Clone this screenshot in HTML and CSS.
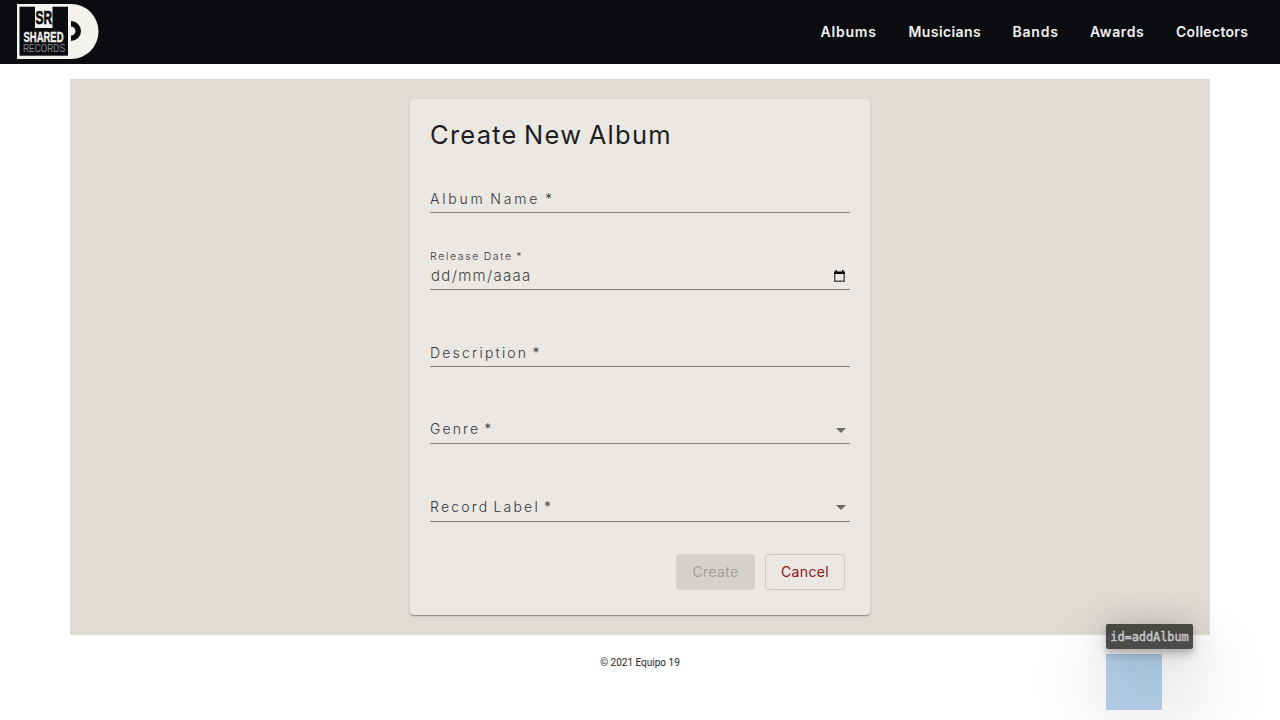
FILE: index.html
```html
<!DOCTYPE html>
<html lang="en">
<head>
<meta charset="utf-8">
<title>Shared Records</title>
<link rel="stylesheet" href="styles.css">
</head>
<body>
<header class="navbar">
  <svg class="logo" width="84" height="58" viewBox="0 0 84 58" aria-label="Shared Records">
    <path fill="#f3f2ee" d="M1 1H55A27.5 27.5 0 0 1 55 56H1Z"/>
    <rect x="3.5" y="3.7" width="48.5" height="49" fill="#0b0c10"/>
    <rect x="19" y="1" width="17.500" height="24" fill="#f3f2ee"/>
    <path fill="#0b0c10" d="M55 18A10 10 0 0 1 55 38V32.5A4.5 4.5 0 0 0 55 23.500Z"/>
    <text class="logo-sr" x="19.500" y="20.500" textLength="16.500" lengthAdjust="spacingAndGlyphs">SR</text>
    <text class="logo-shared" x="7.500" y="38.500" textLength="40" lengthAdjust="spacingAndGlyphs">SHARED</text>
    <text class="logo-records" x="7" y="49" textLength="42" lengthAdjust="spacingAndGlyphs">RECORDS</text>
  </svg>
  <nav class="menu">
    <a class="n1">Albums</a><a class="n2">Musicians</a><a class="n3">Bands</a><a class="n4">Awards</a><a class="n5">Collectors</a>
  </nav>
</header>
<main class="page">
  <form class="card">
    <h1 class="title">Create New Album</h1>
    <div class="field f-name"><span class="label l-name">Album Name *</span></div>
    <div class="field f-date">
      <span class="small-label">Release Date *</span>
      <div class="value-row"><span class="date">dd/mm/aaaa</span>
        <svg class="calendar" width="11" height="12" viewBox="0 0 11 12"><path d="M0 1.500H1.500V0H3V1.500H8V0H9.500V1.500H11V4H0Z"/><path d="M.75 3.500V11.250H10.250V3.500" fill="none" stroke="#555" stroke-width="1.500"/></svg>
      </div>
    </div>
    <div class="field f-desc"><span class="label l-desc">Description *</span></div>
    <div class="field f-genre"><span class="label l-genre">Genre *</span><i class="arrow"></i></div>
    <div class="field f-record"><span class="label l-record">Record Label *</span><i class="arrow"></i></div>
    <div class="actions"><span class="btn create">Create</span><span class="btn cancel">Cancel</span></div>
  </form>
</main>
<footer class="footer">© 2021 Equipo 19</footer>
<div class="highlight"></div>
<div class="tooltip">id=addAlbum</div>
</body>
</html>
```
FILE: styles.css
```css
* { box-sizing: border-box; }
html, body { height: 100%; overflow: hidden; }
body { margin: 0; background: #fff; font-family: Inter, "Liberation Sans", sans-serif; }
.navbar { height: 64px; background: #0b0c10; display: flex; align-items: center; justify-content: space-between; padding: 0 32px 0 16px; }
.logo { display: block; }
.logo-sr { font: 700 19px "Liberation Sans", sans-serif; fill: #0b0c10; stroke: #0b0c10; stroke-width: .7px; }
.logo-shared { font: 700 14.500px "Liberation Sans", sans-serif; fill: #f3f2ee; stroke: #f3f2ee; stroke-width: .3px; }
.logo-records { font: 400 10.500px "Liberation Sans", sans-serif; fill: #8d8e92; }
.menu { display: flex; gap: 32px; color: #f3f2f0; font-size: 14px; font-weight: 600; line-height: 20px; white-space: nowrap; }
.n1 { width: 56px; letter-spacing: .8px; }
.n2 { width: 72px; letter-spacing: .4px; }
.n3 { width: 45.500px; letter-spacing: .8px; }
.n4 { width: 54px; letter-spacing: .6px; }
.n5 { width: 72px; letter-spacing: .3px; }
.page { width: 1140px; height: 556px; margin: 15px auto 0; background: #e0dbd5; padding: 20px 340px; }
.card { height: 516px; padding: 0 20px; display: flex; flex-direction: column; background: #ebe8e3; border-radius: 4px; box-shadow: 0 2px 1px -1px rgba(0,0,0,.2), 0 1px 1px rgba(0,0,0,.14), 0 1px 3px rgba(0,0,0,.12); }
.title { margin: 20px 0 0; height: 30px; line-height: 31px; font-size: 25.500px; font-weight: 400; letter-spacing: 1.250px; word-spacing: -2px; color: #1e1e1e; white-space: nowrap; }
.field { border-bottom: 1px solid #86837f; display: flex; justify-content: space-between; align-items: flex-end; color: #36373a; font-weight: 300; white-space: nowrap; }
.f-name { height: 64px; }
.f-date { height: 77px; flex-direction: column; align-items: stretch; justify-content: flex-end; }
.f-desc, .f-genre { height: 77px; }
.f-record { height: 78px; }
.label { font-size: 14px; line-height: 20px; padding-bottom: 3px; letter-spacing: 2.200px; word-spacing: -2px; }
.l-name { letter-spacing: 2.800px; }
.l-genre { letter-spacing: 2.100px; }
.f-genre .label { padding-bottom: 4px; }
.f-record .label { padding-bottom: 4px; }
.small-label { font-size: 10.500px; line-height: 14px; letter-spacing: 1.650px; word-spacing: -1px; }
.value-row { display: flex; justify-content: space-between; align-items: center; height: 25px; padding: 0 5px 0 1px; }
.calendar { margin-top: -2px; }
.date { font-size: 15px; line-height: 20px; padding-bottom: 2px; letter-spacing: 1.300px; color: #444; }
.arrow { border: 5px solid transparent; border-top-color: #6d6b68; border-bottom: 0; margin: 0 4px 10px 0; }
.f-record .arrow { margin-bottom: 11px; }
.actions { display: flex; justify-content: flex-end; gap: 10px; padding: 32px 5px 0 0; }
.btn { height: 36px; border-radius: 4px; font-size: 14px; line-height: 36px; text-align: center; }
.create { width: 79px; background: #d4d1cc; color: #a19f9b; letter-spacing: .35px; }
.cancel { width: 80px; border: 1px solid #cecbc7; line-height: 34px; color: #8b1016; letter-spacing: .35px; }
.footer { margin-top: 19px; text-align: center; font: 10px/18px Roboto, sans-serif; color: #222; }
.highlight { position: absolute; left: 1106px; top: 654px; width: 56px; height: 56px; background: rgba(111,168,220,.5); }
.tooltip { position: absolute; left: 1106px; top: 624px; width: 87px; height: 25px; border-radius: 2px; background: rgba(50,50,48,.88); color: #c8c8c8; font: 12px/26px "DejaVu Sans Mono", monospace; -webkit-text-stroke: .4px #c8c8c8; letter-spacing: -.1px; text-align: center; box-shadow: 0 3px 3px rgba(0,0,0,.05), 0 7px 6px rgba(0,0,0,.06), 0 5px 10px rgba(0,0,0,.12), 0 0 35px rgba(0,0,0,.2), 0 45px 70px 15px rgba(0,0,0,.12); }
```
